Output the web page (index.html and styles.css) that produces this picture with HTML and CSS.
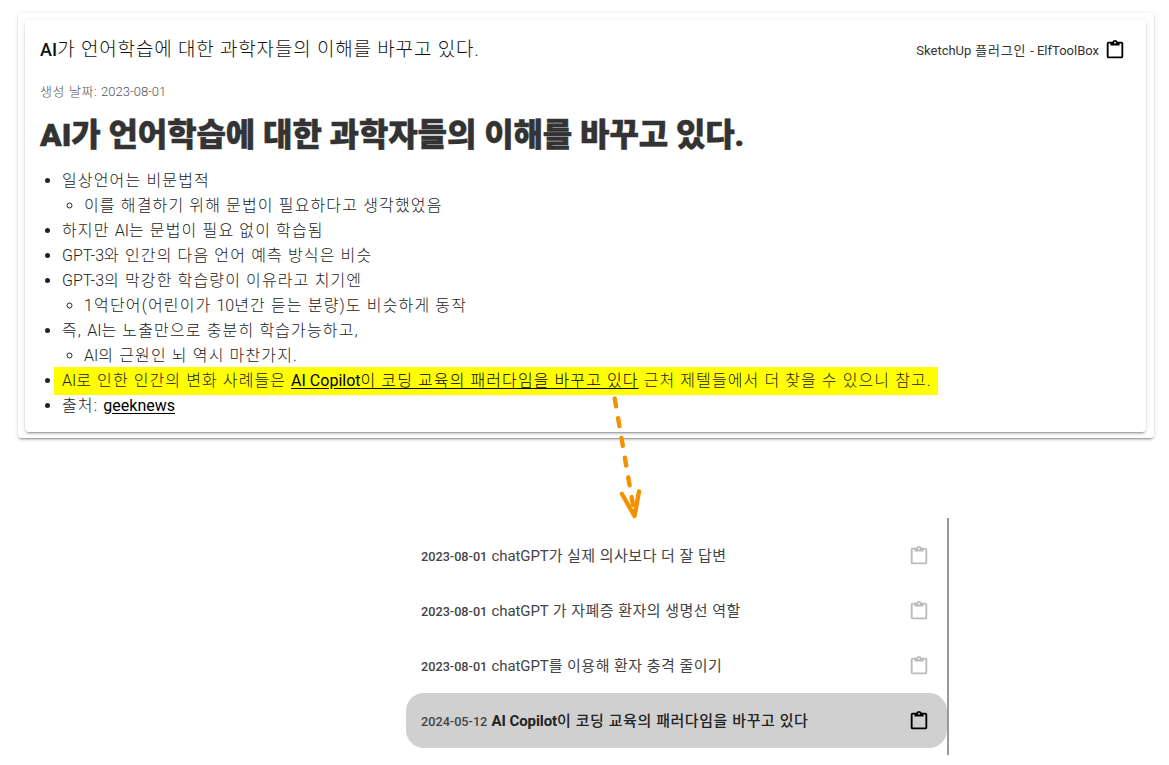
FILE: index.html
```html
<!DOCTYPE html>
<html lang="ko">
<head>
<meta charset="utf-8">
<meta name="viewport" content="width=device-width, initial-scale=1.0">
<link rel="stylesheet" href="styles.css">
<title>AI가 언어학습에 대한 과학자들의 이해를 바꾸고 있다.</title>
</head>
<body>
  <svg class="defs" width="0" height="0">
    <symbol id="clipboard" viewBox="0 0 24 24">
      <path d="M19,3H14.82C14.4,1.84 13.3,1 12,1C10.7,1 9.6,1.84 9.18,3H5A2,2 0 0,0 3,5V19A2,2 0 0,0 5,21H19A2,2 0 0,0 21,19V5A2,2 0 0,0 19,3M12,3A1,1 0 0,1 13,4A1,1 0 0,1 12,5A1,1 0 0,1 11,4A1,1 0 0,1 12,3M7,7H17V5H19V19H5V5H7V7Z"/>
    </symbol>
  </svg>

  <div class="outer-card">
    <div class="card">
      <div class="card-header">
        <div class="card-title"><span class="en">AI</span>가 언어학습에 대한 과학자들의 이해를 바꾸고 있다.</div>
        <div class="card-link">
          <div><span class="en">SketchUp</span> 플러그인 <span class="en">- ElfToolBox</span></div>
          <svg class="icon"><use href="#clipboard"/></svg>
        </div>
      </div>
      <div class="date">생성 날짜: <span class="en">2023-08-01</span></div>
      <h1>AI가 언어학습에 대한 과학자들의 이해를 바꾸고 있다.</h1>
      <ul>
        <li>일상언어는 비문법적
          <ul>
            <li>이를 해결하기 위해 문법이 필요하다고 생각했었음</li>
          </ul>
        </li>
        <li>하지만 <span class="en">AI</span>는 문법이 필요 없이 학습됨</li>
        <li><span class="en">GPT-3</span>와 인간의 다음 언어 예측 방식은 비슷</li>
        <li><span class="en">GPT-3</span>의 막강한 학습량이 이유라고 치기엔
          <ul>
            <li>1억단어(어린이가 <span class="en">10</span>년간 듣는 분량)도 비슷하게 동작</li>
          </ul>
        </li>
        <li>즉, <span class="en">AI</span>는 노출만으로 충분히 학습가능하고,
          <ul>
            <li><span class="en">AI</span>의 근원인 뇌 역시 마찬가지.</li>
          </ul>
        </li>
        <li><span class="mark"><span class="en">AI</span>로 인한 인간의 변화 사례들은 <a href="#"><span class="en">AI Copilot</span>이 코딩 교육의 패러다임을 바꾸고 있다</a> 근처 제텔들에서 더 찾을 수 있으니 참고.</span></li>
        <li>출처: <a href="#"><span class="en">geeknews</span></a></li>
      </ul>
    </div>
  </div>

  <svg class="arrow" width="40" height="136" viewBox="0 0 40 136">
    <path d="M9.700 7.500L28 114" stroke-dasharray="8 12"/>
    <path d="M17 103L29.500 125L34 100.500"/>
  </svg>

  <div class="list">
    <div class="item">
      <div><small>2023-08-01</small> <span class="en">chatGPT</span>가 실제 의사보다 더 잘 답변</div>
      <svg class="icon"><use href="#clipboard"/></svg>
    </div>
    <div class="item">
      <div><small>2023-08-01</small> <span class="en">chatGPT</span> 가 자폐증 환자의 생명선 역할</div>
      <svg class="icon"><use href="#clipboard"/></svg>
    </div>
    <div class="item">
      <div><small>2023-08-01</small> <span class="en">chatGPT</span>를 이용해 환자 충격 줄이기</div>
      <svg class="icon"><use href="#clipboard"/></svg>
    </div>
    <div class="item active">
      <div><small>2024-05-12</small> <b><span class="en">AI Copilot</span>이 코딩 교육의 패러다임을 바꾸고 있다</b></div>
      <svg class="icon"><use href="#clipboard"/></svg>
    </div>
  </div>
</body>
</html>
```
FILE: styles.css
```css
* { box-sizing: border-box; }
body {
  margin: 0;
  padding: 13px 15px 0 18px;
  background: #fff;
  color: #333;
  font-family: Roboto, "Noto Sans CJK KR", sans-serif;
}
.defs { display: block; }
/* latin runs sit tighter than the hangul around them */
.en { letter-spacing: 0; }
.outer-card, .card {
  border-radius: 4px;
  background: #fff;
  box-shadow: 0 3px 1px -2px rgba(0,0,0,.2), 0 2px 2px rgba(0,0,0,.14), 0 1px 5px rgba(0,0,0,.12);
}
.outer-card {
  height: 425px;
  padding: 7px 8px 6px 7px;
}
.card {
  height: 412px;
  padding: 14px 20px 0 15px;
}
.card-header {
  display: flex;
  justify-content: space-between;
  align-items: center;
  height: 30px;
}
.card-title {
  padding-bottom: 3px;
  font-size: 19px;
  font-weight: 300;
  letter-spacing: .82px;
  color: #111;
}
.card-title .en {
  font-size: 18px;
  font-weight: 500;
  letter-spacing: .1px;
}
.card-link {
  display: flex;
  align-items: center;
  gap: 5px;
  font-size: 13px;
  letter-spacing: .75px;
}
.icon {
  width: 22px;
  height: 22px;
  fill: currentColor;
}
.card-link .icon {
  margin-top: 1px;
  color: #000;
}
.date {
  margin-top: 17px;
  font-size: 13px;
  line-height: 22px;
  font-weight: 300;
  letter-spacing: .6px;
  color: #555;
}
.date .en { letter-spacing: 0; }
h1 {
  margin: 11px 0 12px;
  font-size: 32px;
  line-height: 42px;
  font-weight: 900;
  letter-spacing: -.1px;
  -webkit-text-stroke: .5px #333;
}
ul {
  margin: 0;
  padding-left: 22px;
  font-size: 16px;
  line-height: 25px;
  font-weight: 300;
  letter-spacing: 1.15px;
}
li { color: #222; }
a {
  color: #000;
  text-underline-offset: 2px;
}
a .en { font-weight: 400; }
.mark {
  margin-left: -8px;
  padding: 4px 6px 5px 8px;
  background: #ff0;
  letter-spacing: 1.1px;
}
.arrow {
  position: absolute;
  left: 605px;
  top: 391px;
  fill: none;
  stroke: #f39200;
  stroke-width: 4.4;
  stroke-linecap: round;
  stroke-linejoin: round;
}
.list {
  width: 543px;
  height: 237px;
  margin: 80px 0 0 388px;
  padding-top: 10px;
  border-right: 2px solid #999;
}
.item {
  display: flex;
  align-items: center;
  justify-content: space-between;
  height: 55px;
  padding: 0 17px 0 15px;
  font-size: 15px;
  letter-spacing: .47px;
  color: #444;
}
.item div { padding-bottom: 3px; }
.item small {
  font-size: 12.7px;
  font-weight: 500;
  letter-spacing: 0;
}
.item .en { letter-spacing: -.1px; }
.item .icon { color: #bbb; }
.active {
  border-radius: 18px;
  background: #d0d0d0;
  letter-spacing: .57px;
}
.active b { color: #222; font-weight: 500; }
.active .en { font-weight: 700; }
.active .icon { color: #000; }
```
